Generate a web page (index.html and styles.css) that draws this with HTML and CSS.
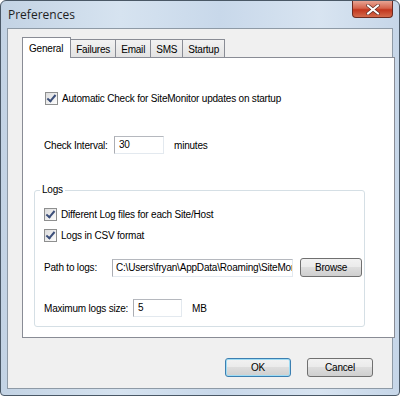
FILE: index.html
```html
<!DOCTYPE html>
<html lang="en">
<head>
<meta charset="UTF-8">
<title>Preferences</title>
<link rel="stylesheet" href="styles.css">
</head>
<body>

<div class="window">
  <!-- Title bar -->
  <div class="titlebar">
    <span class="title">Preferences</span>
    <div class="close-btn">
      <svg width="14" height="11" viewBox="0 0 14 11">
        <path d="M2 1.5 L12 9.5 M12 1.5 L2 9.5" stroke="#5a2a22" stroke-width="3.4" stroke-linecap="square"/>
        <path d="M2 1.5 L12 9.5 M12 1.5 L2 9.5" stroke="#ffffff" stroke-width="2" stroke-linecap="square"/>
      </svg>
    </div>
  </div>

  <!-- Client area -->
  <div class="client">
    <div class="tabs">
      <div class="tab active">General</div>
      <div class="tab">Failures</div>
      <div class="tab">Email</div>
      <div class="tab">SMS</div>
      <div class="tab">Startup</div>
    </div>

    <div class="panel">
      <div class="row check-row first">
        <span class="checkbox checked"></span>
        <span>Automatic Check for SiteMonitor updates on startup</span>
      </div>

      <div class="row interval-row">
        <span class="label interval-label">Check Interval:</span>
        <div class="textbox interval-box">30</div>
        <span class="unit">minutes</span>
      </div>

      <div class="groupbox">
        <span class="group-title">Logs</span>
        <div class="row check-row">
          <span class="checkbox checked"></span>
          <span>Different Log files for each Site/Host</span>
        </div>
        <div class="row check-row second">
          <span class="checkbox checked"></span>
          <span>Logs in CSV format</span>
        </div>
        <div class="row path-row">
          <span class="label path-label">Path to logs:</span>
          <div class="textbox path-box">C:\Users\fryan\AppData\Roaming\SiteMonitor</div>
          <div class="button browse-btn">Browse</div>
        </div>
        <div class="row size-row">
          <span class="label size-label">Maximum logs size:</span>
          <div class="textbox size-box">5</div>
          <span class="unit">MB</span>
        </div>
      </div>
    </div>

    <div class="footer">
      <div class="button default">OK</div>
      <div class="button">Cancel</div>
    </div>
  </div>
</div>

</body>
</html>
```

FILE: styles.css
```css
body {
  margin: 0;
  padding: 0;
  font-family: "Liberation Sans", Arial, sans-serif;
  font-size: 10px;
  letter-spacing: -0.2px;
  color: #000;
  background: #fff;
}
.window {
  width: 398px;
  height: 394px;
  border: 1px solid #4a5866;
  border-radius: 6px 6px 4px 4px;
  background: linear-gradient(90deg, #c3d3e4 0%, #d6e3f0 30%, #c8d8ea 55%, #d8e4f1 80%, #c6d6e8 100%);
  display: flex;
  flex-direction: column;
}
.titlebar {
  height: 27px;
  display: flex;
  justify-content: space-between;
  align-items: flex-start;
}
.title {
  font-family: "Open Sans", "Liberation Sans", sans-serif;
  font-size: 12px;
  letter-spacing: 0;
  margin: 5px 0 0 7px;
  color: #1e1e1e;
}
.close-btn {
  width: 41px;
  height: 17px;
  margin-right: 6px;
  border: 1px solid #6b2a20;
  border-top: none;
  border-radius: 0 0 4px 4px;
  background: linear-gradient(#e8a493 0%, #d5644c 45%, #c2361d 55%, #d46a4b 100%);
  box-sizing: border-box;
  display: flex;
  align-items: center;
  justify-content: center;
}
.client {
  margin: 0 6px 6px 6px;
  flex: 1;
  border: 1px solid #8e9aa6;
  background: #f0f0f0;
  display: flex;
  flex-direction: column;
}
.tabs {
  display: flex;
  align-items: flex-end;
  margin: 8px 0 0 15px;
  height: 20px;
  position: relative;
  z-index: 1;
}
.tab {
  height: 18px;
  box-sizing: border-box;
  padding: 2px 5px 0;
  border: 1px solid #898c95;
  border-bottom: none;
  border-left: none;
  background: linear-gradient(#f2f2f2, #e3e3e3);
  line-height: 15px;
  white-space: nowrap;
}
.tab.active {
  height: 21px;
  margin-bottom: -1px;
  margin-left: -1px;
  border-left: 1px solid #898c95;
  background: #fff;
  padding: 3px 7px 0 6px;
}
.panel {
  margin: 0 0 0 14px;
  width: 349px;
  height: 279px;
  border: 1px solid #898c95;
  background: #fff;
  padding-left: 22px;
  box-sizing: content-box;
}
.row {
  display: flex;
  align-items: center;
  white-space: nowrap;
}
.check-row {
  height: 16px;
}
.check-row.first {
  margin-top: 32px;
}
.checkbox {
  width: 13px;
  height: 13px;
  box-sizing: border-box;
  border: 1px solid #8e8f8f;
  background: linear-gradient(135deg, #dcdcdc, #fdfdfd);
  margin-right: 4px;
  flex-shrink: 0;
  position: relative;
}
.checkbox.checked::after {
  content: "";
  position: absolute;
  left: 3px;
  top: 0px;
  width: 3px;
  height: 7px;
  border: solid #3c4f7a;
  border-width: 0 2px 2px 0;
  transform: rotate(40deg);
}
.interval-row {
  margin-top: 30px;
  margin-left: -1px;
}
.label {
  display: inline-block;
  flex-shrink: 0;
}
.interval-label {
  width: 70px;
}
.textbox {
  height: 18px;
  box-sizing: border-box;
  flex-shrink: 0;
  border: 1px solid #abadb3;
  border-top-color: #b5b8be;
  border-right-color: #e3e9ef;
  border-bottom-color: #e3e9ef;
  background: #fff;
  padding: 1px 0 0 4px;
  line-height: 14px;
  overflow: hidden;
  white-space: nowrap;
}
.interval-box {
  width: 50px;
}
.unit {
  margin-left: 10px;
}
.groupbox {
  position: relative;
  margin: 36px 0 0 -11px;
  width: 331px;
  height: 137px;
  box-sizing: border-box;
  border: 1px solid #d5dfe5;
  border-radius: 3px;
  padding: 15px 0 0 9px;
}
.group-title {
  position: absolute;
  left: 5px;
  top: -8px;
  padding: 0 2px;
  background: #fff;
  line-height: 14px;
}
.check-row.second {
  margin-top: 5px;
}
.path-row {
  margin-top: 15px;
}
.path-label {
  width: 68px;
}
.path-box {
  width: 181px;
  padding-left: 3px;
}
.button {
  height: 19px;
  width: 66px;
  box-sizing: border-box;
  flex-shrink: 0;
  border: 1px solid #707070;
  border-radius: 3px;
  background: linear-gradient(#f2f2f2 0%, #ebebeb 45%, #dddddd 50%, #cfcfcf 100%);
  display: flex;
  align-items: center;
  justify-content: center;
}
.browse-btn {
  width: 62px;
  margin-left: 7px;
}
.size-row {
  margin-top: 22px;
}
.size-label {
  width: 89px;
}
.size-box {
  width: 49px;
}
.footer {
  display: flex;
  justify-content: flex-end;
  gap: 16px;
  margin: 20px 19px 0 0;
}
.button.default {
  border-color: #3c7fb1;
  box-shadow: inset 0 0 0 1px #9fdcf4;
}
```
